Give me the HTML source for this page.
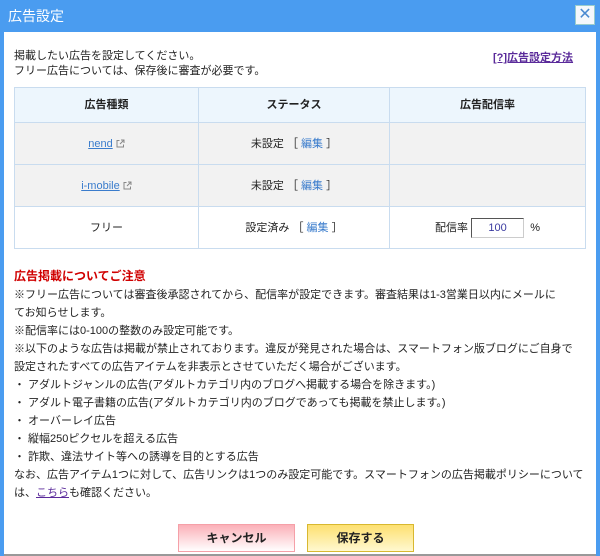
<!DOCTYPE html>
<html><head><meta charset="utf-8"><style>
*{margin:0;padding:0;box-sizing:border-box}
body{width:600px;height:556px;overflow:hidden;background:#4a9cf0;font-family:"Liberation Sans","Noto Sans CJK JP",sans-serif;font-size:11px;color:#222;position:relative}
.title{position:absolute;left:8px;top:6px;color:#fff;font-size:14px}
.close{position:absolute;left:575px;top:5px;width:20px;height:20px;background:#f4f8fc;border:1px solid #9cc;color:#4a8ad0;font-size:16px;line-height:17px;text-align:center}
.panel{position:absolute;left:4px;top:32px;width:592px;height:524px;background:#fff;border-bottom:2px solid #999}
.abs{position:absolute}
table{position:absolute;left:10px;top:55px;width:572px;border-collapse:collapse}
td,th{border:1px solid #c9dcef;text-align:center;height:42px;vertical-align:middle;line-height:14px}
th{background:#edf6fd;font-weight:bold;height:35px}
tr.g td{background:#f2f2f2}
a{color:#3a7ccc}
.p{position:absolute;left:10px;width:570px;line-height:18px}
.btn{position:absolute;top:492px;height:28px;font-weight:bold;font-size:12px;text-align:center;line-height:27px}
svg{vertical-align:middle}
</style></head><body>
<div class="title">広告設定</div>
<div class="close">✕</div>
<div class="panel">
<div class="abs" style="left:10px;top:17px;line-height:15px">掲載したい広告を設定してください。<br>フリー広告については、保存後に審査が必要です。</div>
<div class="abs" style="left:489px;top:17px;color:#5a2a9a;font-weight:bold;text-decoration:underline">[?]広告設定方法</div>
<table>
<tr><th style="width:184px">広告種類</th><th style="width:191px">ステータス</th><th>広告配信率</th></tr>
<tr class="g"><td><a href="#">nend</a> <svg width="9" height="9" viewBox="0 0 9 9"><path d="M3.5 1.5H1v6.5h6.5V5.5M5 1h3v3M8 1L4 5" fill="none" stroke="#888"/></svg></td><td>未設定 ［ <a href="#" style="text-decoration:none">編集</a> ］</td><td></td></tr>
<tr class="g"><td><a href="#">i-mobile</a> <svg width="9" height="9" viewBox="0 0 9 9"><path d="M3.5 1.5H1v6.5h6.5V5.5M5 1h3v3M8 1L4 5" fill="none" stroke="#888"/></svg></td><td>未設定 ［ <a href="#" style="text-decoration:none">編集</a> ］</td><td></td></tr>
<tr><td>フリー</td><td>設定済み ［ <a href="#" style="text-decoration:none">編集</a> ］</td><td>配信率 <span style="display:inline-block;width:53px;height:20px;border:1px solid #555;border-right-color:#ccc;border-bottom-color:#ccc;color:#3a3aa0;line-height:18px;vertical-align:middle">100</span> &nbsp;%</td></tr>
</table>
<div class="p" style="top:235px;color:#d00000;font-weight:bold;font-size:12px">広告掲載についてご注意</div>
<div class="p" style="top:254px">※フリー広告については審査後承認されてから、配信率が設定できます。審査結果は1-3営業日以内にメールに<br>てお知らせします。<br>
※配信率には0-100の整数のみ設定可能です。<br>
※以下のような広告は掲載が禁止されております。違反が発見された場合は、スマートフォン版ブログにご自身で<br>設定されたすべての広告アイテムを非表示とさせていただく場合がございます。<br>
・ アダルトジャンルの広告(アダルトカテゴリ内のブログへ掲載する場合を除きます。)<br>
・ アダルト電子書籍の広告(アダルトカテゴリ内のブログであっても掲載を禁止します。)<br>
・ オーバーレイ広告<br>
・ 縦幅250ピクセルを超える広告<br>
・ 詐欺、違法サイト等への誘導を目的とする広告<br>
なお、広告アイテム1つに対して、広告リンクは1つのみ設定可能です。スマートフォンの広告掲載ポリシーについて<br>は、<a href="#" style="color:#5a2a9a">こちら</a>も確認ください。</div>
<div class="btn" style="left:174px;width:117px;border:1px solid #f5a0a8;background:linear-gradient(#fbb0b8,#fff)">キャンセル</div>
<div class="btn" style="left:303px;width:107px;border:1px solid #d8b830;background:linear-gradient(#fde070,#fff8d0)">保存する</div>
</div>
</body></html>
